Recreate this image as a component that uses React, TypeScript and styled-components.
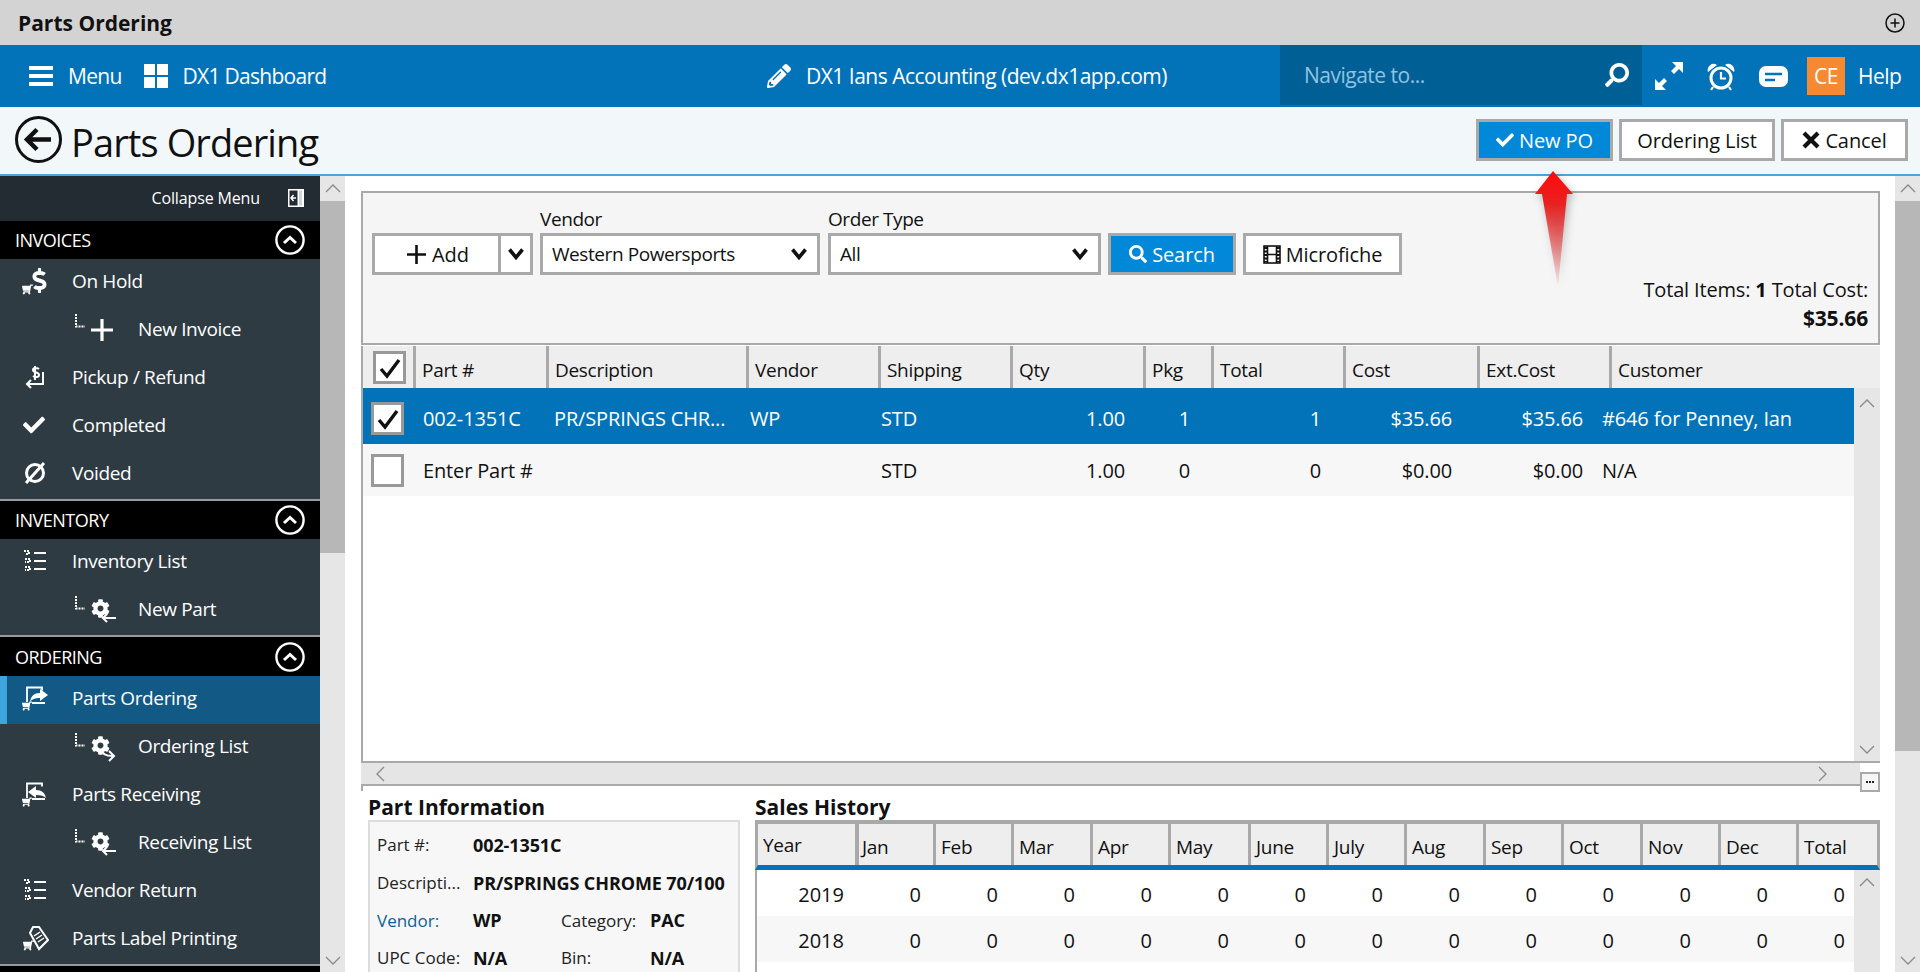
import React from "react";
import styled, { createGlobalStyle } from "styled-components";
import { FaCheck, FaSearch, FaPencilAlt, FaDollarSign, FaCog, FaShoppingCart } from "react-icons/fa";

const Global = createGlobalStyle`
  html, body { margin: 0; padding: 0; background: #fff; overflow: hidden; }
  * { box-sizing: border-box; }
  body { font-family: "Open Sans", "Noto Sans", "Liberation Sans", sans-serif; color: #111; }
`;

const Page = styled.div`
  width: 1920px; height: 972px; overflow: hidden; display: flex; flex-direction: column; position: relative;
`;
const TitleBar = styled.div`
  height: 45px; flex: none; background: #d3d3d3; display: flex; align-items: center; justify-content: space-between;
  padding: 0 15px 0 18px; font-weight: 700; font-size: 21px; color: #111;
`;
const Nav = styled.div`
  height: 62px; flex: none; background: #0273b8; display: flex; color: #fff; font-size: 21px; letter-spacing: -0.5px;
`;
const NavLeft = styled.div`
  flex: 0 0 767px; display: flex; align-items: center; padding-left: 29px; letter-spacing: -0.72px;
`;
const NavCenter = styled.div`
  flex: 0 0 513px; display: flex; align-items: center; gap: 15px;
`;
const NavSearch = styled.div`
  flex: 0 0 362px; height: 60px; background: #005f94; display: flex; align-items: center; justify-content: space-between;
  padding: 0 13px 0 24px; color: #8fc3e3;
`;
const NavTools = styled.div`
  flex: 1; display: flex; align-items: center; height: 100%; padding-left: 13px;
`;
const NavLabel = styled.span<{ $left?: number }>`
  margin-left: ${p => p.$left ?? 0}px;
`;
const Avatar = styled.div`
  width: 38px; height: 38px; background: #f58a33; display: flex; align-items: center; justify-content: center; margin-left: 19px; margin-right: 13px;
`;
const ToolSlot = styled.div<{ $w: number }>`
  width: ${p => p.$w}px; display: flex; justify-content: flex-start; align-items: center;
`;
const PageHead = styled.div`
  height: 69px; flex: none; background: #f2f7fa; border-bottom: 2px solid #4ea4d9; display: flex; align-items: center; justify-content: space-between;
  padding: 0 12px 3px 15px;
`;
const PageTitle = styled.h1`
  margin: 6px 0 0 9px; font-weight: 400; font-size: 38px; letter-spacing: -0.9px; color: #111; line-height: 1;
`;
const HeadLeft = styled.div`
  display: flex; align-items: center;
`;
const HeadButtons = styled.div`
  display: flex; gap: 6px; margin-top: 2px;
`;
const Btn = styled.div<{ $primary?: boolean; $w?: number }>`
  height: 42px; width: ${p => (p.$w ? `${p.$w}px` : "auto")}; border: 3px solid #a9a9a9;
  background: ${p => (p.$primary ? "#0288d9" : "#fff")}; color: ${p => (p.$primary ? "#fff" : "#111")};
  display: flex; align-items: center; justify-content: center; gap: 5px; font-size: 20px; letter-spacing: -0.1px; flex: none;
`;
const Body = styled.div`
  flex: 1; display: flex; min-height: 0;
`;
const Sidebar = styled.aside`
  width: 320px; flex: none; background: #2f3b43; color: #fff; overflow: hidden;
`;
const CollapseRow = styled.div`
  height: 45px; background: #232b33; display: flex; align-items: center; justify-content: flex-end; gap: 28px; padding: 0 16px 1px 0;
  font-size: 16px; letter-spacing: -0.13px;
`;
const SectionHead = styled.div<{ $h: number }>`
  height: ${p => p.$h}px; background: #000; display: flex; align-items: center; justify-content: space-between; padding: 0 15px;
  font-size: 18px; letter-spacing: -0.5px;
`;
const SectionRule = styled.div`
  height: 2px; background: #9a9a9a;
`;
const Item = styled.div<{ $active?: boolean }>`
  height: 48px; display: flex; align-items: center; padding-bottom: 4px; font-size: 19px; letter-spacing: -0.37px;
  padding-left: ${p => (p.$active ? 16 : 23)}px;
  background: ${p => (p.$active ? "#125a85" : "transparent")};
  border-left: ${p => (p.$active ? "7px solid #3ea6dd" : "0")};
`;
const ItemIcon = styled.div<{ $sub?: boolean }>`
  width: ${p => (p.$sub ? 115 : 49)}px; flex: none; height: 28px; display: flex; align-items: center;
  padding-left: ${p => (p.$sub ? 52 : 0)}px; position: relative;
`;
const Overlay = styled.span<{ $l: number; $t: number }>`
  position: absolute; left: ${p => p.$l}px; top: ${p => p.$t}px; display: flex;
`;
const Scroll = styled.div<{ $w: number }>`
  width: ${p => p.$w}px; flex: none; background: #e6e6e6; display: flex; flex-direction: column; position: relative;
`;
const ScrollBtn = styled.div<{ $h?: number }>`
  height: ${p => p.$h ?? 25}px; flex: none; display: flex; align-items: center; justify-content: center;
`;
const Thumb = styled.div<{ $h: number }>`
  height: ${p => p.$h}px; background: #b7b7b7; flex: none;
`;
const Spacer = styled.div`
  flex: 1;
`;
const Main = styled.main`
  flex: 1; min-width: 0; padding: 15px 15px 0 16px; overflow: hidden; display: flex; flex-direction: column;
`;
const FilterPanel = styled.section`
  height: 154px; flex: none; background: #f5f5f5; border: 2px solid #a9a9a9; padding: 14px 9px 0 9px; font-size: 19px; letter-spacing: -0.42px;
`;
const FilterRow = styled.div`
  display: flex; align-items: flex-end; height: 68px; gap: 7px;
`;
const Field = styled.div<{ $w: number; $left?: number }>`
  width: ${p => p.$w}px; flex: none; margin-left: ${p => p.$left ?? 0}px;
`;
const FieldLabel = styled.div`
  height: 26px; line-height: 24px;
`;
const Select = styled.div`
  height: 42px; border: 3px solid #a9a9a9; background: #fff; display: flex; align-items: center; justify-content: space-between; padding: 0 10px 0 9px;
`;
const SplitBtn = styled.div`
  width: 161px; height: 42px; border: 3px solid #a9a9a9; background: #fff; display: flex; flex: none;
`;
const SplitMain = styled.div`
  flex: 1; display: flex; align-items: center; justify-content: center; gap: 6px; padding-left: 3px; font-size: 20px; letter-spacing: -0.1px;
`;
const SplitCaret = styled.div`
  width: 32px; border-left: 3px solid #a9a9a9; display: flex; align-items: center; justify-content: center;
`;
const Totals = styled.div`
  text-align: right; padding-right: 1px; line-height: 29px; font-size: 20px; letter-spacing: -0.16px;
`;
const Grid = styled.section`
  flex: none; border-left: 2px solid #a9a9a9; margin-top: 1px;
`;
const cols = "50px 133px 200px 132px 132px 133px 68px 132px 134px 132px 1fr";
const bodyCols = "52px 133px 200px 132px 132px 133px 68px 132px 134px 123px 1fr";
const GridHead = styled.div`
  height: 42px; display: grid; grid-template-columns: ${cols}; background: #eee; font-size: 19px; letter-spacing: -0.3px;
`;
const HeadCell = styled.div`
  border-left: 3px solid #a9a9a9; padding: 5px 0 0 6px; display: flex; align-items: center; overflow: hidden; white-space: nowrap;
  &:first-child { border-left: 0; padding: 5px 0 0 10px; align-items: flex-start; }
`;
const GridBody = styled.div`
  height: 373px; display: flex;
`;
const Rows = styled.div`
  flex: 1; min-width: 0;
`;
const Row = styled.div<{ $selected?: boolean; $h: number }>`
  height: ${p => p.$h}px; display: grid; grid-template-columns: ${bodyCols}; align-items: center;
  padding-top: ${p => (p.$selected ? 5 : 1)}px;
  background: ${p => (p.$selected ? "#0273b8" : "#f7f7f7")}; color: ${p => (p.$selected ? "#fff" : "#111")};
  font-size: 20px; letter-spacing: -0.15px;
`;
const Cell = styled.div<{ $right?: number; $left?: number }>`
  text-align: ${p => (p.$right !== undefined ? "right" : "left")};
  padding-right: ${p => p.$right ?? 0}px; padding-left: ${p => p.$left ?? 0}px; white-space: nowrap; overflow: hidden;
`;
const Check = styled.div<{ $m?: number }>`
  width: 33px; height: 33px; border: 3px solid #999; background: #fff; margin-left: ${p => p.$m ?? 8}px; display: flex; align-items: center; justify-content: center;
`;
const HScrollRow = styled.div`
  display: flex; height: 30px;
`;
const HScroll = styled.div`
  flex: 1; height: 25px; background: #e5e5e5; border-top: 2px solid #a9a9a9; border-bottom: 2px solid #a9a9a9; display: flex; align-items: center; justify-content: space-between;
  padding: 0 29px 0 11px; margin-left: -2px;
`;
const Corner = styled.div`
  width: 20px; border-top: 2px solid #a9a9a9; padding-top: 9px;
`;
const DotBtn = styled.div`
  width: 20px; height: 20px; border: 2px solid #a9a9a9; background: #f5f5f5; display: flex; align-items: center; justify-content: center; gap: 1px;
`;
const Dot = styled.span`
  width: 2px; height: 2px; background: #222;
`;
const Lower = styled.div`
  display: flex; margin-top: 3px; padding-left: 7px; gap: 15px; flex: 1; min-height: 0;
`;
const InfoCol = styled.div`
  width: 372px; flex: none;
`;
const SalesCol = styled.div`
  flex: 1; min-width: 0;
`;
const LowerTitle = styled.h2`
  margin: 0; height: 26px; line-height: 26px; font-size: 21px; font-weight: 700;
`;
const InfoBox = styled.div`
  background: #f7f7f7; border: 2px solid #ddd; padding: 4px 0 0 7px; display: grid; grid-template-columns: 96px 88px 89px 1fr; grid-auto-rows: 37.7px; align-items: center;
  font-size: 17px; height: 160px;
`;
const InfoLabel = styled.div<{ $link?: boolean }>`
  color: ${p => (p.$link ? "#0b5f96" : "#222")}; white-space: nowrap; overflow: hidden;
`;
const InfoValue = styled.div<{ $span?: boolean }>`
  font-weight: 700; font-size: 18px; letter-spacing: -0.1px; white-space: nowrap; grid-column: ${p => (p.$span ? "span 3" : "auto")};
`;
const SalesGrid = styled.div`
  border-top: 4px solid #a9a9a9;
`;
const salesHead = "97px 78px 78px 79px 78px 80px 78px 78px 79px 78px 79px 78px 78px 1fr";
const SalesHead = styled.div`
  height: 46px; display: grid; grid-template-columns: ${salesHead}; background: #eee; border-bottom: 5px solid #0273b8; font-size: 19px; letter-spacing: -0.3px;
  border-left: 3px solid #a9a9a9; border-right: 3px solid #a9a9a9;
`;
const SalesHeadCell = styled.div`
  padding: 5px 0 0 5px; display: flex; align-items: center; border-left: 3px solid #a9a9a9;
  &:first-child { border-left: 0; padding: 0 0 0 5px; }
  &:nth-child(2) { border-left-width: 4px; padding-left: 3px; }
`;
const SalesBody = styled.div`
  display: flex; height: 130px; border-left: 2px solid #a9a9a9;
`;
const salesCols = "87px repeat(13, 77px)";
const SalesRow = styled.div<{ $alt?: boolean }>`
  height: 46px; padding-top: 2px; display: grid; grid-template-columns: ${salesCols}; align-items: center; font-size: 20px;
  background: ${p => (p.$alt ? "#f7f7f7" : "#fff")}; text-align: right;
`;
const Arrow = styled.svg`
  position: absolute; left: 1530px; top: 168px; filter: drop-shadow(2px 3px 4px rgba(0,0,0,.28));
`;
const BoldDark = styled.strong`
  font-weight: 700;
`;
const Big = styled.div`
  font-weight: 700; font-size: 21px;
`;

const Chevron = ({ dir, c = "#8a8a8a", s = 18 }: { dir: "up" | "down" | "left" | "right"; c?: string; s?: number }) => {
  const d = { up: "M2 12 9 5l7 7", down: "M2 6l7 7 7-7", left: "M12 2 5 9l7 7", right: "M6 2l7 7-7 7" }[dir];
  return <svg width={s} height={s} viewBox="0 0 18 18" fill="none" stroke={c} strokeWidth="1.3"><path d={d} /></svg>;
};
const Caret = () => (
  <svg width="16" height="14" viewBox="0 0 16 14" fill="none" stroke="#111" strokeWidth="3.6"><path d="M1.500 2.500 8 10.500l6.500-8" /></svg>
);
const CheckMark = () => (
  <svg width="24" height="22" viewBox="0 0 24 22" fill="none" stroke="#111" strokeWidth="3.4"><path d="M3 12l6 7L21 3" /></svg>
);
const CircleUp = () => (
  <svg width="30" height="30" viewBox="0 0 30 30" fill="none" stroke="#fff" strokeWidth="2.4"><circle cx="15" cy="15" r="13.6" /><path strokeWidth="3" d="M9 18l6-5.500 6 5.500" /></svg>
);
const DotL = () => (
  <svg width="10" height="14" viewBox="0 0 10 14" fill="none" stroke="#fff" strokeWidth="2" strokeDasharray="2 1"><path d="M1 0v12.500h9" /></svg>
);
const Plus = ({ s, w, c = "#111" }: { s: number; w: number; c?: string }) => (
  <svg width={s} height={s} viewBox={`0 0 ${s} ${s}`} stroke={c} strokeWidth={w}><path d={`M${s / 2} 0v${s}M0 ${s / 2}h${s}`} /></svg>
);
const MiniCart = ({ s = 11 }: { s?: number }) => <FaShoppingCart size={s} color="#fff" style={{ transform: "scaleX(-1)" }} />;

const Gear = ({ kind }: { kind: "in" | "loop" }) => (
  <>
    <Overlay $l={52} $t={1}><DotL /></Overlay>
    <Overlay $l={68} $t={4}><FaCog size={19} color="#fff" /></Overlay>
    <Overlay $l={76} $t={16}>
      <svg width="17" height="14" viewBox="0 0 17 14" fill="none" stroke="#fff" strokeWidth="2">
        {kind === "loop" ? <path d="M3 2c0 4 3 6 11 6M10 3l5 5-5 5" /> : <path d="M17 7H4M8 3 4 7l4 4" />}
      </svg>
    </Overlay>
  </>
);
const ListIcon = () => (
  <svg width="24" height="22" viewBox="0 0 24 22" fill="none" stroke="#fff">
    <path strokeWidth="2" d="M11 3h12M11 11h12M11 19h12" />
    <path strokeWidth="2" strokeDasharray="2 1" d="M1 1h5v3H2M2 9h5v3H2M2 17h5v3H2" />
  </svg>
);
const PageArrow = ({ back }: { back?: boolean }) => (
  <>
    <svg width="26" height="24" viewBox="0 0 26 24" fill="none" stroke="#fff">
      <path strokeWidth="1.800" d="M4 16V1.500h15v3M9 17h13" />
      <path fill="#fff" stroke="none" d={back ? "M5 10l8-6v4c6 0 9 3 10 8-2-2-5-3-10-3v3z" : "M25 9l-8-6v4c-6 0-9 3-10 9 2-3 5-4 10-4v3z"} />
    </svg>
    <Overlay $l={-1} $t={17}><MiniCart s={10} /></Overlay>
  </>
);
const TagIcon = () => (
  <>
    <svg width="26" height="26" viewBox="0 0 26 26" fill="none" stroke="#fff" strokeWidth="2">
      <path d="M7 8 10 2h6l9 13-9 9z" />
      <path strokeWidth="1.500" d="M11 11l6-4M13 14l6-4M15 17l6-4" />
    </svg>
    <Overlay $l={0} $t={16}><MiniCart s={11} /></Overlay>
  </>
);

type I = { label: string; icon: React.ReactNode; sub?: boolean; active?: boolean };
const invoices: I[] = [
  { label: "On Hold", icon: <><Overlay $l={0} $t={1}><FaDollarSign size={25} color="#fff" style={{ marginLeft: 4 }} /></Overlay><Overlay $l={-1} $t={17}><MiniCart /></Overlay></> },
  { label: "New Invoice", sub: true, icon: <><Overlay $l={52} $t={-1}><DotL /></Overlay><Overlay $l={68} $t={4}><Plus s={22} w={3.2} c="#fff" /></Overlay></> },
  { label: "Pickup / Refund", icon: <svg width="24" height="26" viewBox="0 0 24 26" fill="none" stroke="#fff" strokeWidth="2"><path d="M12 2v14M16 5c-2-1.500-6-1.500-6 1 0 3 6 1.500 6 5 0 2.500-4 2.500-6 1" /><path d="M20 8v12H4M8 16l-4 4 4 4" /></svg> },
  { label: "Completed", icon: <FaCheck size={22} color="#fff" /> },
  { label: "Voided", icon: <svg width="24" height="24" viewBox="0 0 24 24" fill="none" stroke="#fff" strokeWidth="3"><circle cx="12" cy="12" r="8.500" /><path d="M3 22 21 2" /></svg> },
];
const inventory: I[] = [
  { label: "Inventory List", icon: <ListIcon /> },
  { label: "New Part", sub: true, icon: <Gear kind="in" /> },
];
const ordering: I[] = [
  { label: "Parts Ordering", active: true, icon: <PageArrow /> },
  { label: "Ordering List", sub: true, icon: <Gear kind="loop" /> },
  { label: "Parts Receiving", icon: <PageArrow back /> },
  { label: "Receiving List", sub: true, icon: <Gear kind="in" /> },
  { label: "Vendor Return", icon: <ListIcon /> },
  { label: "Parts Label Printing", icon: <TagIcon /> },
];

const Items = ({ list }: { list: I[] }) => (
  <>
    {list.map(it => (
      <Item key={it.label} $active={it.active}>
        <ItemIcon $sub={it.sub}>{it.icon}</ItemIcon>
        {it.label}
      </Item>
    ))}
  </>
);

const VBar = ({ w, thumb, up = 25 }: { w: number; thumb?: number; up?: number }) => (
  <Scroll $w={w}>
    <ScrollBtn $h={up}><Chevron dir="up" /></ScrollBtn>
    {thumb ? <Thumb $h={thumb} /> : null}
    <Spacer />
    <ScrollBtn><Chevron dir="down" /></ScrollBtn>
  </Scroll>
);

const headLabels = ["Part #", "Description", "Vendor", "Shipping", "Qty", "Pkg", "Total", "Cost", "Ext.Cost", "Customer"];
const months = ["Jan", "Feb", "Mar", "Apr", "May", "June", "July", "Aug", "Sep", "Oct", "Nov", "Dec", "Total"];

const PartRow = ({ v, selected, checked, h }: { v: string[]; selected?: boolean; checked?: boolean; h: number }) => (
  <Row $selected={selected} $h={h}>
    <Cell><Check>{checked ? <CheckMark /> : null}</Check></Cell>
    <Cell $left={8}>{v[0]}</Cell>
    <Cell $left={6}>{v[1]}</Cell>
    <Cell $left={2}>{v[2]}</Cell>
    <Cell $left={1}>{v[3]}</Cell>
    <Cell $right={20}>{v[4]}</Cell>
    <Cell $right={23}>{v[5]}</Cell>
    <Cell $right={24}>{v[6]}</Cell>
    <Cell $right={27}>{v[7]}</Cell>
    <Cell $right={19}>{v[8]}</Cell>
    <Cell>{v[9]}</Cell>
  </Row>
);

export default function App() {
  return (
    <Page>
      <Global />
      <TitleBar>
        Parts Ordering
        <svg width="20" height="20" viewBox="0 0 20 20" fill="none" stroke="#111" strokeWidth="1.500"><circle cx="10" cy="10" r="9" /><path d="M10 5.500v9M5.500 10h9" /></svg>
      </TitleBar>
      <Nav>
        <NavLeft>
          <svg width="24" height="20" viewBox="0 0 24 20" fill="#fff"><rect y="0" width="24" height="4" /><rect y="8" width="24" height="4" /><rect y="16" width="24" height="4" /></svg>
          <NavLabel $left={15}>Menu</NavLabel>
          <svg width="24" height="24" viewBox="0 0 24 24" fill="#fff" style={{ marginLeft: 22 }}><rect width="11" height="11" /><rect x="13" width="11" height="11" /><rect y="13" width="11" height="11" /><rect x="13" y="13" width="11" height="11" /></svg>
          <NavLabel $left={15}>DX1 Dashboard</NavLabel>
        </NavLeft>
        <NavCenter>
          <FaPencilAlt size={24} color="#fff" />
          DX1 Ians Accounting (dev.dx1app.com)
        </NavCenter>
        <NavSearch>
          Navigate to...
          <FaSearch size={24} color="#fff" style={{ transform: "scaleX(-1)" }} />
        </NavSearch>
        <NavTools>
          <ToolSlot $w={52}>
            <svg width="28" height="28" viewBox="0 0 28 28" fill="#fff"><path d="M28 0v11l-4-4-5 5-3-3 5-5-4-4zM0 28V17l4 4 5-5 3 3-5 5 4 4z" /></svg>
          </ToolSlot>
          <ToolSlot $w={52}>
            <svg width="28" height="29" viewBox="0 0 28 29" fill="none" stroke="#fff" strokeWidth="3"><circle cx="14" cy="16" r="10" /><path strokeWidth="2.200" d="M14 10v6.500h5M6 25l-2 3M22 25l2 3" /><path fill="#fff" stroke="none" d="M1 10a6 6 0 0 1 9-7zM27 10a6 6 0 0 0-9-7z" /></svg>
          </ToolSlot>
          <ToolSlot $w={29}>
            <svg width="29" height="21" viewBox="0 0 29 21"><rect width="29" height="21" rx="7" fill="#fff" /><path d="M6 8h17M6 14h10" stroke="#0273b8" strokeWidth="2.600" /></svg>
          </ToolSlot>
          <Avatar>CE</Avatar>
          Help
        </NavTools>
      </Nav>
      <PageHead>
        <HeadLeft>
          <svg width="47" height="47" viewBox="0 0 47 47" fill="none" stroke="#111"><circle cx="23.500" cy="23.500" r="22" strokeWidth="3" /><path strokeWidth="4.500" d="M36 23.500H13M22 13.500l-10 10 10 10" /></svg>
          <PageTitle>Parts Ordering</PageTitle>
        </HeadLeft>
        <HeadButtons>
          <Btn $primary $w={137}><FaCheck size={18} />New PO</Btn>
          <Btn $w={156}>Ordering List</Btn>
          <Btn $w={127}>
            <svg width="18" height="18" viewBox="0 0 18 18" stroke="#111" strokeWidth="4.200"><path d="M2 2l14 14M16 2 2 16" /></svg>
            Cancel
          </Btn>
        </HeadButtons>
      </PageHead>
      <Body>
        <Sidebar>
          <CollapseRow>
            Collapse Menu
            <svg width="16" height="18" viewBox="0 0 16 18"><rect width="16" height="18" fill="#fff" /><rect x="1.500" y="1.500" width="8" height="15" fill="#232b33" /><rect x="11" y="1.500" width="3" height="15" fill="#cfd6dc" /><path d="M8 9H3M5.500 6 3 9l2.500 3" stroke="#fff" strokeWidth="1.500" fill="none" /></svg>
          </CollapseRow>
          <SectionHead $h={38}>INVOICES<CircleUp /></SectionHead>
          <Items list={invoices} />
          <SectionRule />
          <SectionHead $h={38}>INVENTORY<CircleUp /></SectionHead>
          <Items list={inventory} />
          <SectionRule />
          <SectionHead $h={39}>ORDERING<CircleUp /></SectionHead>
          <Items list={ordering} />
          <SectionRule />
          <SectionHead $h={38} />
        </Sidebar>
        <VBar w={25} thumb={352} />
        <Main>
          <FilterPanel>
            <FilterRow>
              <SplitBtn>
                <SplitMain><Plus s={19} w={2.6} />Add</SplitMain>
                <SplitCaret><Caret /></SplitCaret>
              </SplitBtn>
              <Field $w={280}>
                <FieldLabel>Vendor</FieldLabel>
                <Select>Western Powersports<Caret /></Select>
              </Field>
              <Field $w={273} $left={1}>
                <FieldLabel>Order Type</FieldLabel>
                <Select>All<Caret /></Select>
              </Field>
              <Btn $primary $w={128}><FaSearch size={18} />Search</Btn>
              <Btn $w={159}>
                <svg width="18" height="19" viewBox="0 0 18 19" fill="none" stroke="#111" strokeWidth="1.600"><rect x="1" y="1" width="16" height="17" /><path d="M4.500 1v17M13.500 1v17M4.500 9.500h9" /><path strokeWidth="3" strokeDasharray="2 1.500" d="M2.500 2v15M15.500 2v15" /></svg>
                Microfiche
              </Btn>
            </FilterRow>
            <Totals>
              Total Items: <BoldDark>1</BoldDark> Total Cost:
              <Big>$35.66</Big>
            </Totals>
          </FilterPanel>
          <Grid>
            <GridHead>
              <HeadCell><Check $m={0}><CheckMark /></Check></HeadCell>
              {headLabels.map(l => <HeadCell key={l}>{l}</HeadCell>)}
            </GridHead>
            <GridBody>
              <Rows>
                <PartRow h={56} selected checked v={["002-1351C", "PR/SPRINGS CHR...", "WP", "STD", "1.00", "1", "1", "$35.66", "$35.66", "#646 for Penney, Ian"]} />
                <PartRow h={52} v={["Enter Part #", "", "", "STD", "1.00", "0", "0", "$0.00", "$0.00", "N/A"]} />
              </Rows>
              <VBar w={26} up={32} />
            </GridBody>
            <HScrollRow>
              <HScroll><Chevron dir="left" /><Chevron dir="right" /></HScroll>
              <Corner><DotBtn><Dot /><Dot /><Dot /></DotBtn></Corner>
            </HScrollRow>
          </Grid>
          <Lower>
            <InfoCol>
              <LowerTitle>Part Information</LowerTitle>
              <InfoBox>
                <InfoLabel>Part #:</InfoLabel><InfoValue $span>002-1351C</InfoValue>
                <InfoLabel>Descripti...</InfoLabel><InfoValue $span>PR/SPRINGS CHROME 70/100</InfoValue>
                <InfoLabel $link>Vendor:</InfoLabel><InfoValue>WP</InfoValue><InfoLabel>Category:</InfoLabel><InfoValue>PAC</InfoValue>
                <InfoLabel>UPC Code:</InfoLabel><InfoValue>N/A</InfoValue><InfoLabel>Bin:</InfoLabel><InfoValue>N/A</InfoValue>
              </InfoBox>
            </InfoCol>
            <SalesCol>
              <LowerTitle>Sales History</LowerTitle>
              <SalesGrid>
                <SalesHead>
                  <SalesHeadCell>Year</SalesHeadCell>
                  {months.map(m => <SalesHeadCell key={m}>{m}</SalesHeadCell>)}
                </SalesHead>
                <SalesBody>
                  <Rows>
                    {[["2019", false], ["2018", true]].map(([y, alt]) => (
                      <SalesRow key={String(y)} $alt={alt as boolean}>
                        <div>{y}</div>
                        {months.map(m => <div key={m}>0</div>)}
                      </SalesRow>
                    ))}
                  </Rows>
                  <Scroll $w={26}>
                    <ScrollBtn><Chevron dir="up" /></ScrollBtn>
                    <Spacer />
                    <ScrollBtn $h={30}><Chevron dir="down" /></ScrollBtn>
                  </Scroll>
                </SalesBody>
              </SalesGrid>
            </SalesCol>
          </Lower>
        </Main>
        <VBar w={25} thumb={550} />
      </Body>
      <Arrow width="50" height="125" viewBox="0 0 50 125">
        <defs>
          <linearGradient id="arrowFade" x1="0" y1="0" x2="0" y2="1">
            <stop offset="0" stopColor="#ff0a0a" />
            <stop offset="0.28" stopColor="#e82020" />
            <stop offset="1" stopColor="#e23030" stopOpacity="0.05" />
          </linearGradient>
        </defs>
        <path d="M23 3 43 26H37L28 119 12 26H5z" fill="url(#arrowFade)" />
      </Arrow>
    </Page>
  );
}
